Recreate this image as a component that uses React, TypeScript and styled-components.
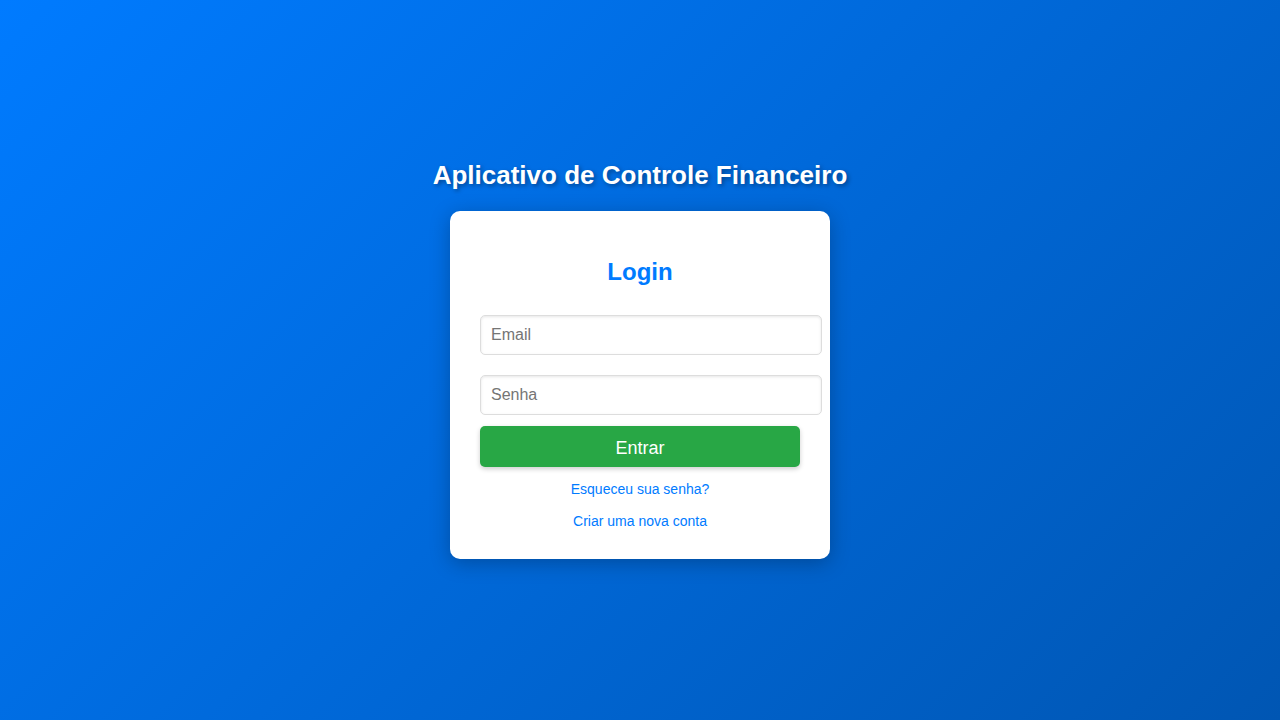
import React from "react";
import styled, { createGlobalStyle } from "styled-components";

const Global = createGlobalStyle`
  html, body { margin: 0; padding: 0; height: 100%; }
  body {
    font-family: "Liberation Sans", Arial, Helvetica, sans-serif;
    background: linear-gradient(135deg, #007bff 0%, #0056b3 100%);
    min-height: 720px;
  }
  #root { height: 100%; }
  * { box-sizing: border-box; }
`;

const Page = styled.div`
  min-height: 720px;
  display: flex;
  flex-direction: column;
  align-items: center;
  justify-content: center;
`;

const AppTitle = styled.h1`
  margin: 0 0 22px;
  font-size: 26px;
  line-height: 28px;
  font-weight: bold;
  color: #ffffff;
  text-shadow: 2px 2px 4px rgba(0, 0, 0, 0.35);
`;

const Card = styled.div`
  width: 380px;
  background: #ffffff;
  border-radius: 10px;
  padding: 30px;
  box-shadow: 0 4px 20px rgba(0, 0, 0, 0.25);
  display: flex;
  flex-direction: column;
`;

const CardTitle = styled.h2`
  margin: 17px 0 29px;
  text-align: center;
  font-size: 24px;
  line-height: 28px;
  font-weight: bold;
  color: #007bff;
`;

const Field = styled.input<{ $mb: number }>`
  width: 342px;
  height: 40px;
  padding: 10px;
  border: 1px solid #dddddd;
  border-radius: 5px;
  font-family: "Liberation Sans", Arial, sans-serif;
  font-size: 16px;
  color: #333;
  box-shadow: inset 0 1px 3px rgba(0, 0, 0, 0.1);
  outline: none;
  margin-bottom: ${(p) => p.$mb}px;
  &::placeholder { color: #757575; }
`;

const SubmitButton = styled.button`
  width: 320px;
  height: 41px;
  padding: 3px 0 0;
  border: none;
  border-radius: 5px;
  background: #28a745;
  color: #ffffff;
  font-family: "Liberation Sans", Arial, sans-serif;
  font-size: 18px;
  cursor: pointer;
  box-shadow: 0 2px 5px rgba(0, 0, 0, 0.2);
  margin-bottom: 14px;
`;

const Links = styled.div`
  display: flex;
  flex-direction: column;
  align-items: center;
  gap: 16px;
`;

const TextLink = styled.a`
  color: #007bff;
  font-size: 14px;
  line-height: 16px;
  text-decoration: none;
`;

export default function App() {
  return (
    <>
      <Global />
      <Page>
        <AppTitle>Aplicativo de Controle Financeiro</AppTitle>
        <Card>
          <CardTitle>Login</CardTitle>
          <Field $mb={20} type="email" placeholder="Email" />
          <Field $mb={11} type="password" placeholder="Senha" />
          <SubmitButton>Entrar</SubmitButton>
          <Links>
            <TextLink href="#">Esqueceu sua senha?</TextLink>
            <TextLink href="#">Criar uma nova conta</TextLink>
          </Links>
        </Card>
      </Page>
    </>
  );
}
